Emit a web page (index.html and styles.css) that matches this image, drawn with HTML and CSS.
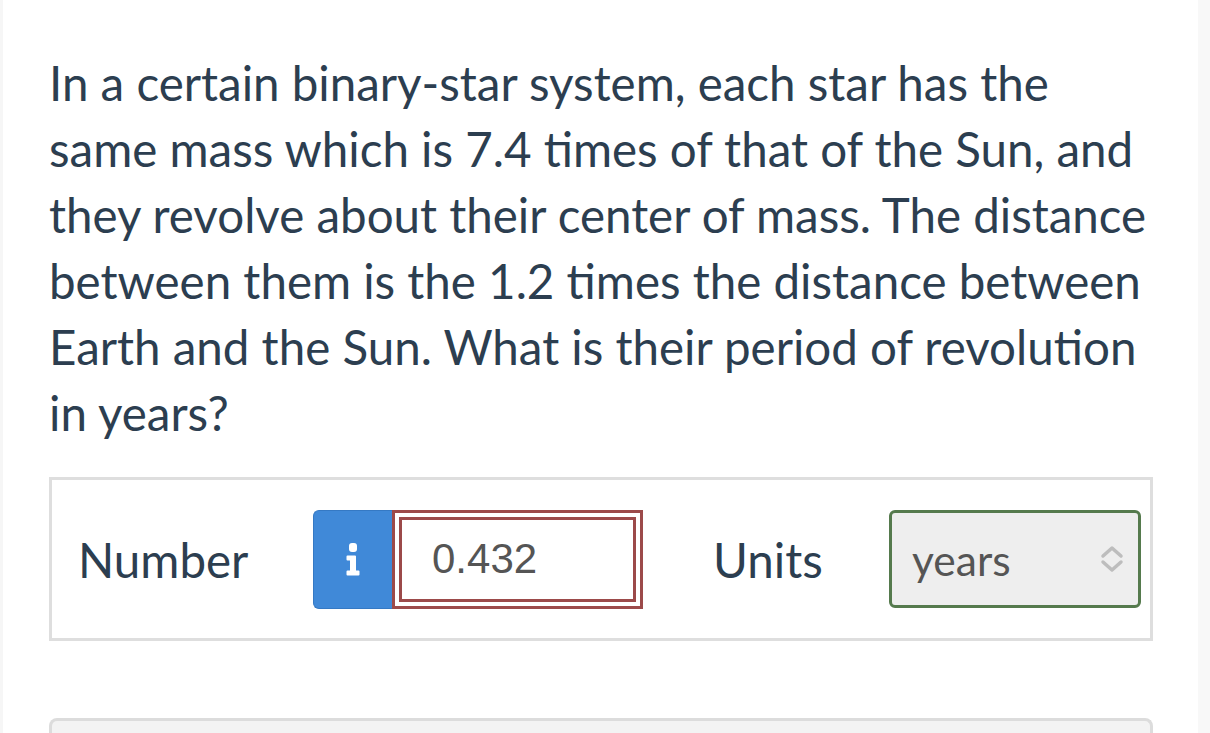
FILE: index.html
```html
<!DOCTYPE html>
<html>
<head>
<meta charset="utf-8">
<link rel="stylesheet" href="styles.css">
</head>
<body>
<div class="page">
  <div class="strip-left"></div>
  <main class="main">
    <p class="question">In a certain binary-star system, each star has the same mass which is 7.4 times of that of the Sun, and they revolve about their center of mass. The distance between them is the 1.2 times the distance between Earth and the Sun. What is their period of revolution in years?</p>
    <div class="answer-box">
      <span class="label label-number">Number</span>
      <span class="info-btn"><svg width="16" height="33" viewBox="0 0 16 33"><rect x="4" y="0" width="8" height="9" rx="3" fill="#fff"/><path d="M1.5 13.5 Q1.5 12.5 2.5 12.5 H10 Q11 12.5 11 13.5 V27.5 H13.5 Q14.5 27.5 14.5 28.5 V31.5 Q14.5 32.5 13.5 32.5 H2.5 Q1.5 32.5 1.5 31.5 V28.5 Q1.5 27.5 2.5 27.5 H5 V17.5 H2.5 Q1.5 17.5 1.5 16.5 Z" fill="#fff"/></svg></span>
      <span class="input-wrap"><span class="input-inner">0.432</span></span>
      <span class="label label-units">Units</span>
      <span class="select">years<svg class="arrows" width="24" height="30" viewBox="0 0 24 30"><path d="M3 12 L12 4 L21 12" fill="none" stroke="#bdbdbd" stroke-width="3.5" stroke-linecap="round" stroke-linejoin="round"/><path d="M3 18 L12 26 L21 18" fill="none" stroke="#bdbdbd" stroke-width="3.5" stroke-linecap="round" stroke-linejoin="round"/></svg></span>
    </div>
    <div class="next-box"></div>
  </main>
  <div class="strip-right"></div>
</div>
</body>
</html>
```
FILE: styles.css
```css
html, body {
  margin: 0;
  padding: 0;
  background: #fff;
  overflow: hidden;
}
.page {
  display: flex;
  height: 733px;
  font-family: Lato, "Open Sans", sans-serif;
  color: #2c3e50;
}
.strip-left {
  width: 3px;
  background: #f6f6f6;
}
.strip-right {
  width: 12px;
  background: #f8f8f8;
}
.main {
  flex: 1;
  padding: 50px 43px 0 46px;
}
.question {
  margin: 0;
  font-size: 47.5px;
  line-height: 66px;
}
.answer-box {
  margin-top: 31px;
  margin-right: 2px;
  border: 3px solid #dedede;
  display: flex;
  align-items: center;
  padding-left: 26px;
  box-sizing: border-box;
  height: 164px;
}
.label {
  font-size: 47.5px;
  color: #2c3e50;
}
.label-number {
  width: 235px;
}
.info-btn {
  width: 79px;
  height: 99px;
  background: #4089d8;
  border-radius: 6px 0 0 6px;
  display: flex;
  align-items: center;
  justify-content: center;
  box-sizing: border-box;
  border: 1px solid #3579c4;
  border-right: none;
}
.input-wrap {
  width: 251px;
  height: 99px;
  border: 3px solid #9c4a4a;
  padding: 4px;
  box-sizing: border-box;
  display: flex;
}
.input-inner {
  flex: 1;
  border: 3px solid #9c4a4a;
  display: flex;
  align-items: center;
  padding-left: 30px;
  font-family: "Liberation Sans", Arial, sans-serif;
  font-size: 42px;
  color: #555;
}
.label-units {
  margin-left: 70px;
  width: 176px;
}
.select {
  width: 252px;
  height: 98px;
  box-sizing: border-box;
  border: 3px solid #557a4d;
  border-radius: 6px;
  background: #eeeeee;
  display: flex;
  align-items: center;
  padding-left: 20px;
  padding-right: 14px;
  font-size: 42.5px;
  color: #555;
}
.arrows {
  margin-left: auto;
}
.next-box {
  margin-top: 77px;
  margin-right: 2px;
  height: 40px;
  border: 3px solid #dcdcdc;
  border-bottom: none;
  border-radius: 8px 8px 0 0;
  background: #f3f3f3;
}
```
